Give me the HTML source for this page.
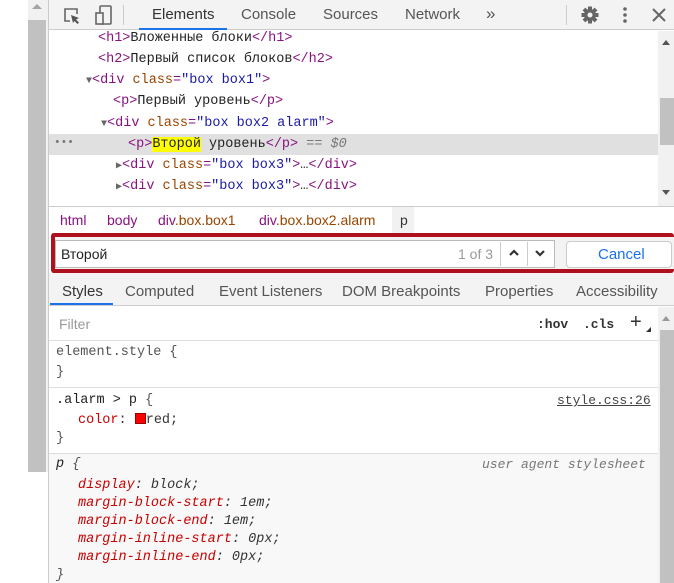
<!DOCTYPE html>
<html><head><meta charset="utf-8"><style>
*{box-sizing:border-box;margin:0;padding:0}
body{width:674px;height:583px;overflow:hidden;background:#fff;position:relative;font-family:"Liberation Sans",sans-serif;color:#333}
.a{position:absolute;white-space:nowrap}
.m{font-family:"Liberation Mono","DejaVu Sans Mono",monospace;font-size:13.5px}
.tag{color:#881280}.at{color:#994500}.av{color:#1a1aa6}.tx{color:#222}
.ui{font-size:15px;color:#333}
.pr{color:#c80000}
</style></head><body>
<!-- left strips -->
<div class="a" style="left:28px;top:0;width:20px;height:472px;background:#f1f1f1"></div>
<div class="a" style="left:28px;top:20px;width:18px;height:452px;background:#c1c1c1"></div>
<div class="a" style="left:32px;top:4px;width:0;height:0;border-left:5px solid transparent;border-right:5px solid transparent;border-bottom:5px solid #a3a3a3"></div>
<div class="a" style="left:48px;top:0;width:1px;height:583px;background:#ccc"></div>
<!-- toolbar -->
<div class="a" style="left:49px;top:0;width:625px;height:30px;background:#f3f3f3;border-bottom:1px solid #ccc"></div>
<svg class="a" style="left:62px;top:6px" width="20" height="20" viewBox="0 0 20 20"><path d="M8 15H3V3h12v5" fill="none" stroke="#666" stroke-width="1.6"/><path d="M9 9l8 3-3 1.5 3 3-1.5 1.5-3-3L11 17z" fill="#555"/></svg>
<svg class="a" style="left:94px;top:4px" width="20" height="22" viewBox="0 0 20 22"><rect x="6" y="2" width="11" height="18" rx="1" fill="none" stroke="#666" stroke-width="1.6"/><rect x="2" y="9" width="7" height="11" fill="#f3f3f3" stroke="#666" stroke-width="1.6"/></svg>
<div class="a" style="left:123px;top:5px;width:1px;height:20px;background:#ccc"></div>
<div class="a ui" style="left:152px;top:6px">Elements</div>
<div class="a" style="left:139px;top:28px;width:88px;height:2px;background:#1a73e8"></div>
<div class="a ui" style="left:241px;top:6px;color:#555">Console</div>
<div class="a ui" style="left:323px;top:6px;color:#555">Sources</div>
<div class="a ui" style="left:405px;top:6px;color:#555">Network</div>
<div class="a ui" style="left:486px;top:4px;color:#555;font-size:17px">»</div>
<div class="a" style="left:566px;top:5px;width:1px;height:20px;background:#ccc"></div>
<svg class="a" style="left:580px;top:5px" width="20" height="20" viewBox="0 0 20 20"><g fill="#666"><circle cx="10" cy="10" r="6"/><rect x="8" y="1.5" width="4" height="17"/><rect x="1.5" y="8" width="17" height="4"/><rect x="8" y="1.5" width="4" height="17" transform="rotate(45 10 10)"/><rect x="8" y="1.5" width="4" height="17" transform="rotate(-45 10 10)"/></g><circle cx="10" cy="10" r="2.5" fill="#f3f3f3"/></svg>
<svg class="a" style="left:620px;top:5px" width="10" height="20"><circle cx="5" cy="4" r="1.8" fill="#666"/><circle cx="5" cy="10" r="1.8" fill="#666"/><circle cx="5" cy="16" r="1.8" fill="#666"/></svg>
<svg class="a" style="left:651px;top:7px" width="16" height="16"><path d="M2 2L14 14M14 2L2 14" stroke="#666" stroke-width="2"/></svg>
<!-- DOM tree -->
<div class="a" style="left:49px;top:134px;width:609px;height:21px;background:#e0e0e0"></div>
<div class="a m" style="left:54px;top:137px;color:#777;font-size:11px">•••</div>
<div class="a m" style="left:98px;top:31px"><span class="tag">&lt;h1&gt;</span><span class="tx">Вложенные блоки</span><span class="tag">&lt;/h1&gt;</span></div>
<div class="a m" style="left:98px;top:52px"><span class="tag">&lt;h2&gt;</span><span class="tx">Первый список блоков</span><span class="tag">&lt;/h2&gt;</span></div>
<div class="a m" style="left:86px;top:73px"><span style="color:#666;font-size:10px">▼</span><span class="tag">&lt;div </span><span class="at">class</span><span class="tag">=</span><span class="av">"box box1"</span><span class="tag">&gt;</span></div>
<div class="a m" style="left:113px;top:94px"><span class="tag">&lt;p&gt;</span><span class="tx">Первый уровень</span><span class="tag">&lt;/p&gt;</span></div>
<div class="a m" style="left:101px;top:116px"><span style="color:#666;font-size:10px">▼</span><span class="tag">&lt;div </span><span class="at">class</span><span class="tag">=</span><span class="av">"box box2 alarm"</span><span class="tag">&gt;</span></div>
<div class="a m" style="left:128px;top:137px"><span class="tag">&lt;p&gt;</span><span class="tx" style="background:#ffff00">Второй</span><span class="tx"> уровень</span><span class="tag">&lt;/p&gt;</span><span style="color:#777"> == <i>$0</i></span></div>
<div class="a m" style="left:116px;top:158px"><span style="color:#666;font-size:10px">▶</span><span class="tag">&lt;div </span><span class="at">class</span><span class="tag">=</span><span class="av">"box box3"</span><span class="tag">&gt;</span>…<span class="tag">&lt;/div&gt;</span></div>
<div class="a m" style="left:116px;top:179px"><span style="color:#666;font-size:10px">▶</span><span class="tag">&lt;div </span><span class="at">class</span><span class="tag">=</span><span class="av">"box box3"</span><span class="tag">&gt;</span>…<span class="tag">&lt;/div&gt;</span></div>
<div class="a" style="left:658px;top:31px;width:16px;height:175px;background:#f1f1f1"></div>
<div class="a" style="left:660px;top:98px;width:14px;height:47px;background:#c1c1c1"></div>
<div class="a" style="left:662px;top:40px;border-left:4px solid transparent;border-right:4px solid transparent;border-bottom:5px solid #555"></div>
<div class="a" style="left:662px;top:190px;border-left:4px solid transparent;border-right:4px solid transparent;border-top:5px solid #555"></div>
<!-- breadcrumbs -->
<div class="a" style="left:49px;top:206px;width:625px;height:27px;background:#fff;border-top:1px solid #ccc"></div>
<div class="a" style="left:392px;top:207px;width:22px;height:26px;background:#f1f1f1"></div>
<div class="a" style="left:60px;top:212px;font-size:14px;color:#881280">html</div>
<div class="a" style="left:107px;top:212px;font-size:14px;color:#881280">body</div>
<div class="a" style="left:158px;top:212px;font-size:14px;color:#881280">div<span style="color:#994500">.box.box1</span></div>
<div class="a" style="left:259px;top:212px;font-size:14px;color:#881280">div<span style="color:#994500">.box.box2.alarm</span></div>
<div class="a" style="left:400px;top:212px;font-size:14px;color:#333">p</div>
<!-- search -->
<div class="a" style="left:51px;top:233px;width:623px;height:40px;border:4px solid #b0101e;border-right:none;border-radius:3px;background:#f3f3f3"></div>
<div class="a" style="left:55px;top:240px;width:500px;height:28px;background:#fff;border:1px solid #bbb"></div>
<div class="a" style="left:61px;top:246px;font-size:14px;color:#222">Второй</div>
<div class="a" style="left:458px;top:246px;font-size:14px;color:#999">1 of 3</div>
<div class="a" style="left:500px;top:242px;width:1px;height:24px;background:#ccc"></div>
<div class="a" style="left:527px;top:242px;width:1px;height:24px;background:#ccc"></div>
<svg class="a" style="left:508px;top:248px" width="12" height="10"><path d="M2 7L6 3L10 7" fill="none" stroke="#333" stroke-width="2.2"/></svg>
<svg class="a" style="left:534px;top:248px" width="12" height="10"><path d="M2 3L6 7L10 3" fill="none" stroke="#333" stroke-width="2.2"/></svg>
<div class="a" style="left:566px;top:241px;width:106px;height:27px;background:#fff;border:1px solid #ccc;border-radius:4px"></div>
<div class="a" style="left:598px;top:246px;font-size:15px;color:#1a73e8">Cancel</div>
<!-- style tabs -->
<div class="a" style="left:49px;top:273px;width:625px;height:33px;background:#f3f3f3;border-bottom:1px solid #ccc"></div>
<div class="a ui" style="left:62px;top:283px">Styles</div>
<div class="a" style="left:50px;top:303px;width:63px;height:2px;background:#1a73e8"></div>
<div class="a ui" style="left:125px;top:283px;color:#555">Computed</div>
<div class="a ui" style="left:219px;top:283px;color:#555">Event Listeners</div>
<div class="a ui" style="left:342px;top:283px;color:#555">DOM Breakpoints</div>
<div class="a ui" style="left:485px;top:283px;color:#555">Properties</div>
<div class="a ui" style="left:576px;top:283px;color:#555">Accessibility</div>
<!-- filter -->
<div class="a" style="left:52px;top:311px;width:470px;height:26px;background:#fff"></div>
<div class="a" style="left:59px;top:316px;font-size:14px;color:#999">Filter</div>
<div class="a m" style="left:537px;top:317px;font-weight:bold;color:#333;font-size:13px">:hov</div>
<div class="a m" style="left:583px;top:317px;font-weight:bold;color:#333;font-size:13px">.cls</div>
<div class="a" style="left:630px;top:311px;font-size:20px;color:#333">+</div>
<div class="a" style="left:646px;top:327px;border-left:5px solid transparent;border-bottom:5px solid #333"></div>
<div class="a" style="left:658px;top:307px;width:16px;height:276px;background:#f1f1f1"></div>
<div class="a" style="left:662px;top:316px;border-left:4px solid transparent;border-right:4px solid transparent;border-bottom:5px solid #999"></div>
<div class="a" style="left:660px;top:330px;width:14px;height:253px;background:#c1c1c1"></div>
<!-- rules -->
<div class="a" style="left:49px;top:340px;width:609px;height:1px;background:#ddd"></div>
<div class="a m" style="left:56px;top:345px;color:#555">element.style {</div>
<div class="a m" style="left:56px;top:365px;color:#555">}</div>
<div class="a" style="left:49px;top:387px;width:609px;height:1px;background:#ddd"></div>
<div class="a m" style="left:56px;top:393px;color:#222">.alarm &gt; p <span style="color:#555">{</span></div>
<div class="a m" style="left:557px;top:393px;color:#444;text-decoration:underline;font-size:13px">style.css:26</div>
<div class="a m" style="left:78px;top:413px"><span class="pr">color</span>: <span style="display:inline-block;width:11px;height:11px;background:red;border:1px solid #900;vertical-align:-1px"></span>red;</div>
<div class="a m" style="left:56px;top:431px;color:#555">}</div>
<div class="a" style="left:49px;top:453px;width:609px;height:130px;background:#f8f8f8;border-top:1px solid #ddd"></div>
<div class="a m" style="left:56px;top:457px;font-style:italic;color:#222">p <span style="color:#555">{</span></div>
<div class="a m" style="left:482px;top:457px;font-style:italic;color:#777;font-size:13px">user agent stylesheet</div>
<div class="a m" style="left:78px;top:478px;font-style:italic"><span class="pr">display</span>: block;</div>
<div class="a m" style="left:78px;top:496px;font-style:italic"><span class="pr">margin-block-start</span>: 1em;</div>
<div class="a m" style="left:78px;top:514px;font-style:italic"><span class="pr">margin-block-end</span>: 1em;</div>
<div class="a m" style="left:78px;top:532px;font-style:italic"><span class="pr">margin-inline-start</span>: 0px;</div>
<div class="a m" style="left:78px;top:550px;font-style:italic"><span class="pr">margin-inline-end</span>: 0px;</div>
<div class="a m" style="left:56px;top:568px;font-style:italic;color:#555">}</div>
</body></html>
